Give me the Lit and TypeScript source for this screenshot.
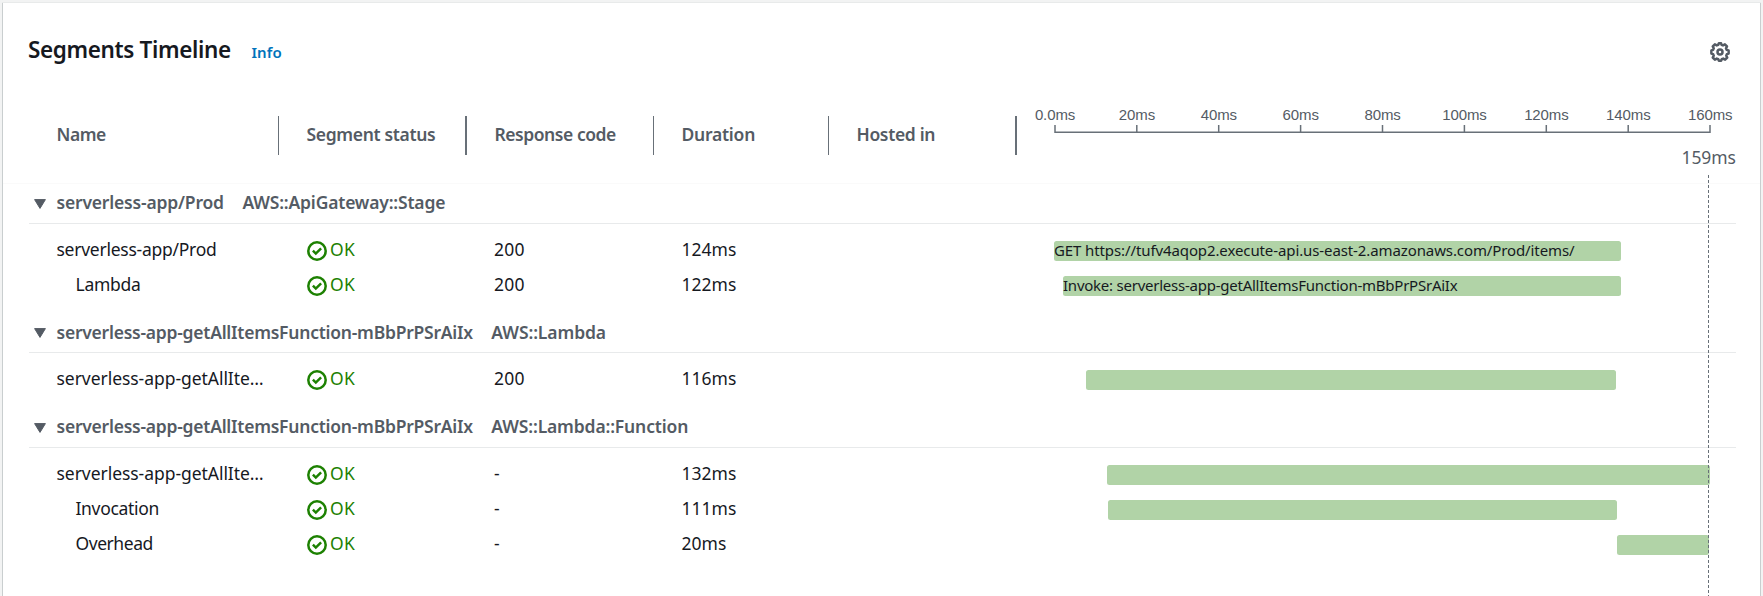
import { LitElement, html, css, svg } from 'lit';
import { customElement, property } from 'lit/decorators.js';
import { styleMap } from 'lit/directives/style-map.js';

interface Segment {
  name: string;
  fit: string;
  child?: boolean;
  code: string;
  duration: string;
  start: number;
  width: number;
  label?: string;
  labelFit?: string;
}

interface Group {
  name: string;
  nameFit: string;
  type: string;
  typeFit: string;
  segments: Segment[];
}

const GROUPS: Group[] = [
  {
    name: 'serverless-app/Prod', nameFit: 'fit-18',
    type: 'AWS::ApiGateway::Stage', typeFit: 'fit-18',
    segments: [
      { name: 'serverless-app/Prod', fit: 'fit-26', code: '200', duration: '124ms', start: 0, width: 567,
        label: 'GET https://tufv4aqop2.execute-api.us-east-2.amazonaws.com/Prod/items/', labelFit: 'fit-10' },
      { name: 'Lambda', fit: 'fit-26', child: true, code: '200', duration: '122ms', start: 9, width: 558,
        label: 'Invoke: serverless-app-getAllItemsFunction-mBbPrPSrAiIx', labelFit: 'fit-24' },
    ],
  },
  {
    name: 'serverless-app-getAllItemsFunction-mBbPrPSrAiIx', nameFit: 'fit-24',
    type: 'AWS::Lambda', typeFit: 'fit-10',
    segments: [
      { name: 'serverless-app-getAllIte…', fit: 'fit-5', code: '200', duration: '116ms', start: 32, width: 530 },
    ],
  },
  {
    name: 'serverless-app-getAllItemsFunction-mBbPrPSrAiIx', nameFit: 'fit-24',
    type: 'AWS::Lambda::Function', typeFit: 'fit-15',
    segments: [
      { name: 'serverless-app-getAllIte…', fit: 'fit-5', code: '-', duration: '132ms', start: 53, width: 603 },
      { name: 'Invocation', fit: 'fit-33', child: true, code: '-', duration: '111ms', start: 54, width: 509 },
      { name: 'Overhead', fit: 'fit-45', child: true, code: '-', duration: '20ms', start: 563, width: 92 },
    ],
  },
];

const TICKS = ['0.0ms', '20ms', '40ms', '60ms', '80ms', '100ms', '120ms', '140ms', '160ms'];

const fits = css`
  .fit-5 { letter-spacing: -0.05px; }
  .fit-10 { letter-spacing: -0.105px; }
  .fit-15 { letter-spacing: -0.15px; }
  .fit-18 { letter-spacing: -0.18px; }
  .fit-24 { letter-spacing: -0.24px; }
  .fit-26 { letter-spacing: -0.26px; }
  .fit-33 { letter-spacing: -0.33px; }
  .fit-45 { letter-spacing: -0.45px; }
`;

@customElement('segment-row')
class SegmentRow extends LitElement {
  @property({ attribute: false }) segment!: Segment;

  static styles = [fits, css`
    :host {
      display: grid;
      grid-template-columns: 250px 187.5px 187.5px 175px 197.5px 656px;
      height: 35px;
      padding-left: 56.5px;
      white-space: nowrap;
    }
    .cell { line-height: 31.9px; }
    .child { padding-left: 19px; }
    .status { display: flex; color: #1d8102; padding-left: 0.5px; }
    .status svg { display: block; width: 20px; height: 20px; margin-top: 7px; }
    .ok { margin-left: 3px; letter-spacing: 0.3px; }
    .code { letter-spacing: 0.2px; }
    .bar {
      box-sizing: border-box;
      height: 20px;
      margin-top: 7px;
      border-radius: 2.5px;
      background: #b1d3a7;
      font-size: 15px;
      line-height: 19px;
    }
  `];

  render() {
    const s = this.segment;
    return html`
      <div class="cell ${s.child ? 'child' : ''} ${s.fit}">${s.name}</div>
      <div class="cell status">
        <svg viewBox="0 0 20 20" fill="none" stroke="#1d8102" stroke-width="2.5">
          <circle cx="10" cy="10" r="8.7"/>
          <path d="M5.9 9.7 8.8 12.6 14.1 7.3"/>
        </svg>
        <span class="ok">OK</span>
      </div>
      <div class="cell code">${s.code}</div>
      <div class="cell">${s.duration}</div>
      <div></div>
      <div>
        <div class="bar ${s.labelFit ?? ''}" style=${styleMap({ marginLeft: `${s.start}px`, width: `${s.width}px` })}>${s.label ?? ''}</div>
      </div>
    `;
  }
}

@customElement('time-axis')
class TimeAxis extends LitElement {
  static styles = css`
    :host { display: block; font-family: "Liberation Sans", Arial, sans-serif; font-size: 15px; color: #545b64; }
    .labels { display: grid; grid-template-columns: repeat(9, 81.9px); margin-left: -39.9px; text-align: center; line-height: 18px; letter-spacing: -0.1px; }
    svg { display: block; width: 660px; height: 11px; }
  `;
  render() {
    return html`
      <div class="labels">${TICKS.map(t => html`<span>${t}</span>`)}</div>
      <svg viewBox="0 0 660 11" stroke="#687078" stroke-width="1.5" fill="none">
        <path d="M1 1V8.2H656V1"/>
        ${TICKS.slice(1, -1).map((_, i) => svg`<path d="M${(i + 1) * 81.9 + 0.9} 1v7"/>`)}
      </svg>
    `;
  }
}

@customElement('app-root')
class AppRoot extends LitElement {
  static styles = [fits, css`
    :host {
      display: block;
      position: relative;
      box-sizing: border-box;
      height: 596px;
      overflow: hidden;
      padding: 3px 2px 0 2px;
      background: #f2f3f3;
      font-family: "Noto Sans", sans-serif;
      font-size: 17.5px;
      color: #16191f;
      white-space: nowrap;
    }
    .card {
      box-sizing: border-box;
      height: 593px;
      border-left: 1px solid #c9cecf;
      border-right: 1px solid #c9cecf;
      background: #fff;
      box-shadow: 0 -1px 0 #e8eaea;
    }
    .top { display: flex; align-items: baseline; height: 95px; padding: 29px 26px 0 25px; box-sizing: border-box; }
    h2 { margin: 0; font-size: 22.5px; line-height: 35px; font-weight: 600; letter-spacing: -0.36px; }
    .info { margin-left: 20.5px; font-size: 15px; font-weight: 600; color: #0073bb; letter-spacing: 0.15px; }
    .gear { width: 20px; height: 20px; margin-left: auto; align-self: flex-start; margin-top: 10px; margin-right: 4px; }
    .head { display: grid; grid-template-columns: 276px 188px 187px 175px 188px 1fr; height: 86px; border-bottom: 1px solid #fafafa; box-sizing: border-box; }
    .col { height: 39px; margin-top: 18px; box-sizing: border-box; border-right: 1px solid #687078; font-weight: 600; line-height: 37px; color: #545b64; padding-left: 27.5px; }
    .col.first { padding-left: 53.5px; }
    .col.wide { border-right-width: 2px; }
    .time { padding-left: 37px; padding-top: 8px; }
    .total { margin-top: 10px; margin-left: 627.5px; line-height: 24px; color: #545b64; letter-spacing: -0.1px; }
    .groups { margin-top: -9.5px; margin-left: -3px; }
    .group { height: 48.4px; margin: 0 24.5px 10.1px 28.5px; display: flex; align-items: center; border-bottom: 1px solid #e8eaeb; font-weight: 600; color: #545b64; }
    .caret { width: 12px; height: 10px; margin: 10px 10.5px 0 5.5px; }
    .gname { padding-top: 7.2px; }
    .gtype { margin-left: 18.5px; padding-top: 7.2px; }
    .marker {
      position: absolute;
      left: 1708px;
      top: 175px;
      bottom: 0;
      width: 1px;
      background: repeating-linear-gradient(#687078 0 3px, transparent 3px 5px);
    }
  `];

  render() {
    return html`
      <div class="card">
        <div class="top">
          <h2>Segments Timeline</h2>
          <span class="info">Info</span>
          <svg class="gear" viewBox="0 0 16 16" fill="none" stroke="#545b64" stroke-width="2" stroke-linejoin="round">
            <path d="M14.9 9.2V6.8l-1.6-.5-.5-1.2.8-1.5-1.7-1.7-1.5.8-1.2-.5L8.9 1H7.1l-.5 1.2-1.2.5-1.5-.8-1.7 1.7.8 1.5-.5 1.2-1.4.5v2.4l1.4.5.5 1.2-.8 1.5 1.7 1.7 1.5-.8 1.2.5.5 1.1h1.8l.5-1.1 1.2-.5 1.5.8 1.7-1.7-.8-1.5.5-1.2z"/>
            <circle cx="8" cy="8" r="2"/>
          </svg>
        </div>
        <div class="head">
          <div class="col first fit-45">Name</div>
          <div class="col wide fit-33">Segment status</div>
          <div class="col fit-45">Response code</div>
          <div class="col fit-24">Duration</div>
          <div class="col wide fit-33">Hosted in</div>
          <div class="time">
            <time-axis></time-axis>
            <div class="total">159ms</div>
          </div>
        </div>
        <div class="groups">
          ${GROUPS.map(g => html`
            <div class="group">
              <svg class="caret" viewBox="0 0 12 10"><path d="M.6 .6H11.4L6 9.4z" fill="#545b64" stroke="#545b64" stroke-linejoin="round"/></svg>
              <span class="gname ${g.nameFit}">${g.name}</span>
              <span class="gtype ${g.typeFit}">${g.type}</span>
            </div>
            ${g.segments.map(s => html`<segment-row .segment=${s}></segment-row>`)}
          `)}
        </div>
      </div>
      <div class="marker"></div>
    `;
  }
}
